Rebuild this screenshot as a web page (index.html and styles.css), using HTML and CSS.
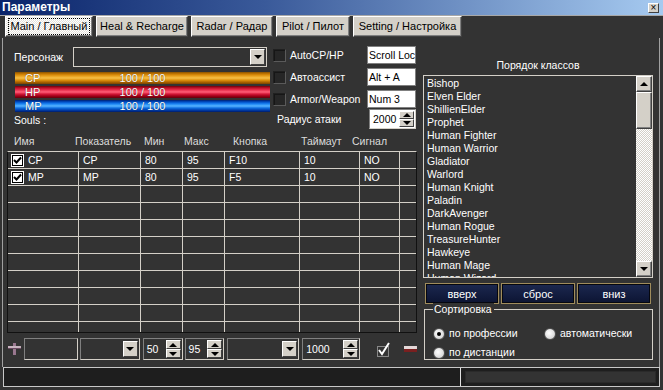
FILE: index.html
```html
<!DOCTYPE html>
<html lang="ru">
<head>
    <meta charset="UTF-8">
    <meta name="viewport" content="width=device-width, initial-scale=1.0">
    <title>Параметры</title>
    <link rel="stylesheet" href="styles.css">
</head>
<body>

    <div class="titlebar">
        <span class="title">Параметры</span>
        <span class="close">×</span>
    </div>

    <div class="tabs">
        <div class="tab tab-main active"><span>Main / Главный</span></div>
        <div class="tab tab-heal">Heal &amp; Recharge</div>
        <div class="tab tab-radar">Radar / Радар</div>
        <div class="tab tab-pilot">Pilot / Пилот</div>
        <div class="tab tab-setting">Setting / Настройка</div>
    </div>

    <div class="panel">
        <div class="left">
            <div class="top">
                <div class="char">
                    <div class="char-row">
                        <span class="char-label">Персонаж</span>
                        <div class="combo combo-char"><span class="drop"><i class="arrow-down"></i></span></div>
                    </div>
                    <div class="bar bar-cp"><span class="bar-name">CP</span><span class="bar-val">100 / 100</span></div>
                    <div class="bar bar-hp"><span class="bar-name">HP</span><span class="bar-val">100 / 100</span></div>
                    <div class="bar bar-mp"><span class="bar-name">MP</span><span class="bar-val">100 / 100</span></div>
                    <div class="souls">Souls :</div>
                </div>
                <div class="opts">
                    <div class="opt"><span class="chk"></span><span class="opt-label">AutoCP/HP</span><span class="field">Scroll Loc</span></div>
                    <div class="opt"><span class="chk"></span><span class="opt-label">Автоассист</span><span class="field">Alt + A</span></div>
                    <div class="opt"><span class="chk"></span><span class="opt-label">Armor/Weapon</span><span class="field">Num 3</span></div>
                    <div class="radius">
                        <span class="radius-label">Радиус атаки</span>
                        <div class="spin spin-light spin-radius">
                            <span class="spin-val">2000</span>
                            <span class="spin-btn"><i><b class="arrow-up"></b></i><i><b class="arrow-down"></b></i></span>
                        </div>
                    </div>
                </div>
            </div>

            <div class="thead">
                <span class="h-name">Имя</span>
                <span class="h-ind">Показатель</span>
                <span class="h-min">Мин</span>
                <span class="h-max">Макс</span>
                <span class="h-key">Кнопка</span>
                <span class="h-time">Таймаут</span>
                <span>Сигнал</span>
            </div>

            <div class="grid">
                <div class="row">
                    <div class="cell first"><span class="cbox"><svg width="9" height="9" viewBox="0 0 9 9"><path d="M1 4 L3.5 6.5 L8 1.5" fill="none" stroke="#000" stroke-width="2"/></svg></span>CP</div>
                    <div class="cell">CP</div><div class="cell">80</div><div class="cell">95</div>
                    <div class="cell">F10</div><div class="cell">10</div><div class="cell">NO</div><div class="cell last"></div>
                </div>
                <div class="row">
                    <div class="cell first"><span class="cbox"><svg width="9" height="9" viewBox="0 0 9 9"><path d="M1 4 L3.5 6.5 L8 1.5" fill="none" stroke="#000" stroke-width="2"/></svg></span>MP</div>
                    <div class="cell">MP</div><div class="cell">80</div><div class="cell">95</div>
                    <div class="cell">F5</div><div class="cell">10</div><div class="cell">NO</div><div class="cell last"></div>
                </div>
                <div class="row"><div class="cell"></div><div class="cell"></div><div class="cell"></div><div class="cell"></div><div class="cell"></div><div class="cell"></div><div class="cell"></div><div class="cell last"></div></div>
                <div class="row"><div class="cell"></div><div class="cell"></div><div class="cell"></div><div class="cell"></div><div class="cell"></div><div class="cell"></div><div class="cell"></div><div class="cell last"></div></div>
                <div class="row"><div class="cell"></div><div class="cell"></div><div class="cell"></div><div class="cell"></div><div class="cell"></div><div class="cell"></div><div class="cell"></div><div class="cell last"></div></div>
                <div class="row"><div class="cell"></div><div class="cell"></div><div class="cell"></div><div class="cell"></div><div class="cell"></div><div class="cell"></div><div class="cell"></div><div class="cell last"></div></div>
                <div class="row"><div class="cell"></div><div class="cell"></div><div class="cell"></div><div class="cell"></div><div class="cell"></div><div class="cell"></div><div class="cell"></div><div class="cell last"></div></div>
                <div class="row"><div class="cell"></div><div class="cell"></div><div class="cell"></div><div class="cell"></div><div class="cell"></div><div class="cell"></div><div class="cell"></div><div class="cell last"></div></div>
                <div class="row"><div class="cell"></div><div class="cell"></div><div class="cell"></div><div class="cell"></div><div class="cell"></div><div class="cell"></div><div class="cell"></div><div class="cell last"></div></div>
                <div class="row"><div class="cell"></div><div class="cell"></div><div class="cell"></div><div class="cell"></div><div class="cell"></div><div class="cell"></div><div class="cell"></div><div class="cell last"></div></div>
                <div class="row"><div class="cell"></div><div class="cell"></div><div class="cell"></div><div class="cell"></div><div class="cell"></div><div class="cell"></div><div class="cell"></div><div class="cell last"></div></div>
            </div>

            <div class="editor">
                <svg class="ico-plus" width="13" height="12" viewBox="0 0 13 12">
                    <rect x="5" y="0" width="3" height="12" fill="#9a7890"/>
                    <rect x="0" y="3" width="13" height="3" fill="#c8b4c0"/>
                    <rect x="0" y="5" width="13" height="1" fill="#6a4a60"/>
                </svg>
                <div class="edit edit-name"></div>
                <div class="combo combo-ind"><span class="drop"><i class="arrow-down"></i></span></div>
                <div class="spin spin-min">
                    <span class="spin-val">50</span>
                    <span class="spin-btn"><i><b class="arrow-up"></b></i><i><b class="arrow-down"></b></i></span>
                </div>
                <div class="spin spin-max">
                    <span class="spin-val">95</span>
                    <span class="spin-btn"><i><b class="arrow-up"></b></i><i><b class="arrow-down"></b></i></span>
                </div>
                <div class="combo combo-key"><span class="drop"><i class="arrow-down"></i></span></div>
                <div class="spin spin-time">
                    <span class="spin-val">1000</span>
                    <span class="spin-btn"><i><b class="arrow-up"></b></i><i><b class="arrow-down"></b></i></span>
                </div>
                <svg class="ico-check" width="15" height="17" viewBox="0 0 15 17">
                    <rect x="1.5" y="5.5" width="11" height="10" fill="none" stroke="#8a8a8a"/>
                    <path d="M3 9 L6 13 L13 2" fill="none" stroke="#fff" stroke-width="2"/>
                </svg>
                <svg class="ico-minus" width="13" height="10" viewBox="0 0 13 10">
                    <rect x="0" y="2" width="13" height="3" fill="#e4d8d8"/>
                    <rect x="0" y="5" width="13" height="3" fill="#7a2020"/>
                </svg>
            </div>
        </div>

        <div class="right">
            <div class="order-title">Порядок классов</div>
            <div class="listbox">
                <div class="items">
                    <div>Bishop</div>
                    <div>Elven Elder</div>
                    <div>ShillienElder</div>
                    <div>Prophet</div>
                    <div>Human Fighter</div>
                    <div>Human Warrior</div>
                    <div>Gladiator</div>
                    <div>Warlord</div>
                    <div>Human Knight</div>
                    <div>Paladin</div>
                    <div>DarkAvenger</div>
                    <div>Human Rogue</div>
                    <div>TreasureHunter</div>
                    <div>Hawkeye</div>
                    <div>Human Mage</div>
                    <div>Human Wizard</div>
                </div>
                <div class="scrollbar">
                    <span class="sb-btn"><i class="arrow-up"></i></span>
                    <span class="sb-thumb"></span>
                    <span class="sb-track"></span>
                    <span class="sb-btn"><i class="arrow-down"></i></span>
                </div>
            </div>
            <div class="order-buttons">
                <button>вверх</button>
                <button>сброс</button>
                <button>вниз</button>
            </div>
            <div class="group">
                <span class="legend">Сортировка</span>
                <div class="radio-row">
                    <label class="radio radio-prof"><span class="dot checked"></span>по профессии</label>
                    <label class="radio"><span class="dot"></span>автоматически</label>
                </div>
                <div class="radio-row second">
                    <label class="radio"><span class="dot"></span>по дистанции</label>
                </div>
            </div>
        </div>
    </div>

    <div class="status">
        <div class="status-main"></div>
        <div class="status-side"><div class="status-inner"></div></div>
    </div>

</body>
</html>
```

FILE: styles.css
```css
* {
    box-sizing: border-box;
}
body {
    margin: 0;
    width: 663px;
    height: 390px;
    overflow: hidden;
    background: #333333;
    font-family: "Liberation Sans", Arial, sans-serif;
    font-size: 10.5px;
    color: #ffffff;
}

/* title bar */
.titlebar {
    height: 15px;
    padding: 0 4px 0 2px;
    display: flex;
    align-items: center;
    justify-content: space-between;
    background: linear-gradient(to right, #0a246a, #3a5a9a 40%, #a6caf0);
}
.title {
    font-size: 12px;
    font-weight: bold;
    line-height: 15px;
}
.close {
    width: 11px;
    height: 10px;
    background: #d4d0c8;
    border: 1px solid;
    border-color: #ffffff #404040 #404040 #ffffff;
    color: #000;
    font-size: 10px;
    line-height: 7px;
    text-align: center;
}

/* tabs */
.tabs {
    height: 23px;
    border-top: 1px solid #a8a8a8;
    padding-left: 5px;
    display: flex;
    gap: 3px;
}
.tab {
    height: 21px;
    background: #d4d0c8;
    color: #000;
    font-size: 11px;
    line-height: 19px;
    text-align: center;
    border: 1px solid;
    border-color: #ffffff #404040 #404040 #ffffff;
    box-shadow: inset -1px -1px 0 #808080;
}
.tab.active {
    background: repeating-conic-gradient(#ffffff 0 25%, #e4e2dc 0 50%) 0 0 / 2px 2px;
    padding: 2px 3px;
    line-height: 15px;
}
.tab.active span {
    display: block;
    outline: 1px dotted #000;
}
.tab-main { width: 88px; }
.tab-heal { width: 92px; }
.tab-radar { width: 82px; }
.tab-pilot { width: 74px; }
.tab-setting { width: 109px; }

/* main panel */
.panel {
    height: 329px;
    margin: 0 3px 0 2px;
    border-left: 1px solid #a0a0a0;
    border-right: 1px solid #a0a0a0;
    padding-left: 4px;
    display: flex;
    gap: 6px;
}
.left {
    width: 410px;
}
.top {
    height: 92px;
    display: flex;
}
.char {
    width: 266px;
}
.char-row {
    margin-top: 9px;
    height: 20px;
    display: flex;
    align-items: center;
}
.char-label {
    width: 66px;
    padding-left: 7px;
}

/* combo boxes */
.combo {
    height: 20px;
    border: 1px solid #d4d0c8;
    padding: 1px;
    display: flex;
    justify-content: flex-end;
}
.combo-char {
    width: 194px;
}
.drop {
    width: 15px;
    height: 16px;
    background: #d4d0c8;
    border: 1px solid;
    border-color: #ffffff #404040 #404040 #ffffff;
    display: flex;
    align-items: center;
    justify-content: center;
}
.arrow-down {
    width: 0;
    height: 0;
    border-left: 4px solid transparent;
    border-right: 4px solid transparent;
    border-top: 4px solid #000;
}
.arrow-up {
    width: 0;
    height: 0;
    border-left: 4px solid transparent;
    border-right: 4px solid transparent;
    border-bottom: 4px solid #000;
}

/* CP / HP / MP bars */
.bar {
    width: 255px;
    height: 12px;
    margin: 0 0 2px 8px;
    display: grid;
    line-height: 12px;
    font-size: 11px;
}
.char-row + .bar {
    margin-top: 5px;
}
.bar span {
    grid-area: 1 / 1;
    text-shadow: 0 0 1px rgba(0, 0, 0, 0.6);
}
.bar-name {
    padding-left: 10px;
}
.bar-val {
    text-align: center;
}
.bar-cp {
    background: linear-gradient(#8a5200 0, #c87a00 2px, #e8a01c 4px, #f6c048 6px, #e09410 8px, #b06600 10px, #7a4400 12px);
}
.bar-hp {
    background: linear-gradient(#70000a 0, #c0102a 2px, #e8304e 4px, #ff6078 6px, #d41838 8px, #a00018 10px, #60000a 12px);
}
.bar-mp {
    background: linear-gradient(#002070 0, #0050c8 2px, #1c86f4 4px, #58b4ff 6px, #1070e0 8px, #0040b0 10px, #001c68 12px);
}
.souls {
    padding-left: 7px;
    line-height: 13px;
}

/* options column */
.opts {
    width: 143px;
    padding-top: 8px;
    display: flex;
    flex-direction: column;
    gap: 4px;
}
.opt {
    height: 18px;
    display: flex;
    align-items: center;
}
.chk {
    width: 13px;
    height: 13px;
    margin-right: 4px;
    background: #262626;
    border: 1px solid;
    border-color: #202020 #5a5a5a #5a5a5a #202020;
    box-shadow: inset 1px 1px 0 #161616;
}
.opt-label {
    flex: 1;
    white-space: nowrap;
}
.field {
    width: 49px;
    height: 18px;
    background: #ffffff;
    color: #000;
    border: 1px solid #808080;
    padding-left: 1px;
    line-height: 16px;
    white-space: nowrap;
    overflow: hidden;
}
.radius {
    margin-top: -3px;
    height: 20px;
    display: flex;
    align-items: center;
}
.radius-label {
    flex: 1;
    padding-left: 4px;
}

/* spin boxes */
.spin {
    height: 22px;
    border: 1px solid;
    border-color: #808080 #d4d0c8 #d4d0c8 #808080;
    padding: 1px;
    display: flex;
    align-items: center;
}
.spin-light {
    background: #ffffff;
    color: #000;
}
.spin-radius {
    width: 47px;
    height: 20px;
}
.spin-val {
    flex: 1;
    padding-left: 2px;
}
.spin-btn {
    width: 15px;
    height: 100%;
    display: flex;
    flex-direction: column;
}
.spin-btn i {
    flex: 1;
    background: #d4d0c8;
    border: 1px solid;
    border-color: #ffffff #404040 #404040 #ffffff;
    display: flex;
    align-items: center;
    justify-content: center;
}

/* table */
.thead {
    height: 21px;
    padding: 5px 0 0 7px;
    line-height: 13px;
    color: #dcdcdc;
    display: flex;
    white-space: nowrap;
}
.h-name { width: 61px; }
.h-ind { width: 69px; }
.h-min { width: 40px; }
.h-max { width: 49px; }
.h-key { width: 68px; }
.h-time { width: 51px; }
.grid {
    height: 182px;
    border: 1px solid #111111;
    border-top-color: #d4d0c8;
    overflow: hidden;
}
.row {
    height: 17px;
    display: grid;
    grid-template-columns: 71px 62px 42px 42px 75px 60px 40px 16px;
    border-bottom: 1px solid #d4d0c8;
}
.cell {
    border-right: 1px solid #d4d0c8;
    line-height: 16px;
    padding-left: 4px;
    white-space: nowrap;
    overflow: hidden;
}
.cell.first {
    padding-left: 3px;
    display: flex;
    align-items: center;
    gap: 4px;
}
.cell.last {
    border-right: none;
}
.cbox {
    width: 13px;
    height: 13px;
    background: #ffffff;
    border: 1px solid #ffffff;
    box-shadow: inset 0 0 0 1px #000;
    display: flex;
    align-items: center;
    justify-content: center;
}

/* editor row */
.editor {
    margin-top: 5px;
    height: 22px;
    display: flex;
    align-items: center;
    gap: 2px;
}
.ico-plus {
    margin: 0 1px;
}
.edit {
    height: 22px;
    border: 1px solid;
    border-color: #808080 #d4d0c8 #d4d0c8 #808080;
}
.edit-name { width: 54px; }
.editor .combo {
    height: 22px;
    border-color: #808080 #d4d0c8 #d4d0c8 #808080;
    padding: 2px 1px;
}
.combo-ind { width: 60px; }
.combo-key { width: 72px; margin-left: 1px; }
.spin-min, .spin-max { width: 40px; }
.spin-min { margin-left: 1px; }
.spin-time { width: 58px; margin-left: 1px; }
.ico-check { margin-left: 14px; }
.ico-minus { margin-left: 11px; }

/* right column */
.right {
    width: 230px;
}
.order-title {
    margin-top: 21px;
    line-height: 13px;
    text-align: center;
}
.listbox {
    margin-top: 3px;
    height: 203px;
    border: 1px solid #d4d0c8;
    display: flex;
    overflow: hidden;
}
.items {
    flex: 1;
    padding: 1px 0 0 3px;
    line-height: 13px;
    white-space: nowrap;
}
.scrollbar {
    width: 16px;
    display: flex;
    flex-direction: column;
}
.sb-btn {
    height: 16px;
    background: #d4d0c8;
    border: 1px solid;
    border-color: #ffffff #404040 #404040 #ffffff;
    box-shadow: inset -1px -1px 0 #808080;
    display: flex;
    align-items: center;
    justify-content: center;
}
.sb-thumb {
    height: 37px;
    background: #d4d0c8;
    border: 1px solid;
    border-color: #ffffff #404040 #404040 #ffffff;
    box-shadow: inset -1px -1px 0 #808080;
}
.sb-track {
    flex: 1;
    background: repeating-conic-gradient(#ffffff 0 25%, #d4d0c8 0 50%) 0 0 / 2px 2px;
}
.order-buttons {
    margin: 5px 0 0 2px;
    display: flex;
    gap: 2px;
}
.order-buttons button {
    width: 74px;
    height: 21px;
    padding: 0;
    font-family: inherit;
    font-size: 11px;
    color: #ffffff;
    background: linear-gradient(#1c2850, #0c1432);
    border: 1px solid #a08c5c;
    box-shadow: inset 0 0 0 1px #05070f;
}

/* sorting group */
.group {
    margin: 5px 0 0 1px;
    height: 51px;
    border: 1px solid #d4d0c8;
    padding-left: 8px;
}
.legend {
    display: inline-block;
    margin-top: -7px;
    padding: 0 2px 0 1px;
    line-height: 13px;
    background: #333333;
    vertical-align: top;
}
.radio-row {
    margin-top: 5px;
    height: 13px;
    display: flex;
}
.radio-row.second {
    margin-top: 6px;
}
.radio {
    display: flex;
    align-items: center;
    gap: 4px;
    line-height: 13px;
}
.radio-prof {
    width: 111px;
}
.dot {
    width: 12px;
    height: 12px;
    border-radius: 50%;
    background: radial-gradient(circle at 40% 40%, #ffffff, #c8c8c8);
    border: 1px solid #505050;
    display: flex;
    align-items: center;
    justify-content: center;
}
.dot.checked::after {
    content: "";
    width: 4px;
    height: 4px;
    border-radius: 50%;
    background: #000;
}

/* status bar */
.status {
    height: 20px;
    margin: 0 3px;
    border: 1px solid #c8c8c8;
    display: flex;
}
.status-main {
    width: 456px;
    background: #1e1e1e;
}
.status-side {
    flex: 1;
    border-left: 1px solid #e0e0e0;
    background: #1e1e1e;
    padding: 3px 3px 3px 4px;
}
.status-inner {
    height: 100%;
    background: #333333;
    border: 1px solid #2a2a2a;
}
```
